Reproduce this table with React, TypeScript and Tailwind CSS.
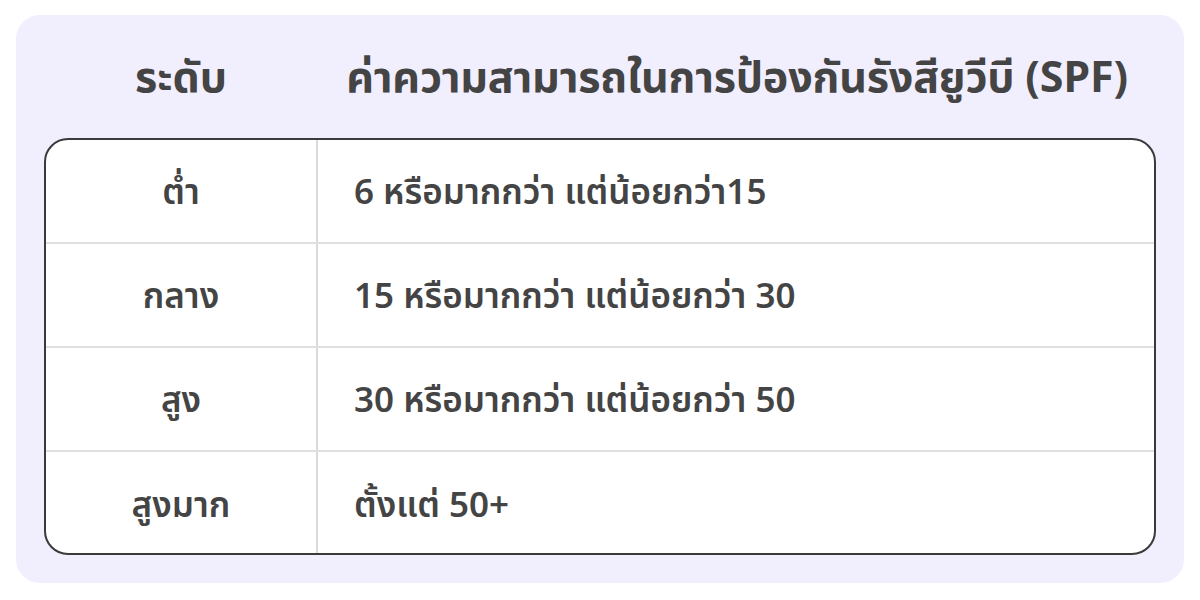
const rows = [
  { level: "ต่ำ", spf: "6 หรือมากกว่า แต่น้อยกว่า15" },
  { level: "กลาง", spf: "15 หรือมากกว่า แต่น้อยกว่า 30" },
  { level: "สูง", spf: "30 หรือมากกว่า แต่น้อยกว่า 50" },
  { level: "สูงมาก", spf: "ตั้งแต่ 50+" },
];

export default function App() {
  return (
    <div
      className="min-h-screen bg-white pt-[15px] px-[16px] text-[#444444]"
      style={{ fontFamily: '"Noto Sans Thai", "Noto Sans", "Liberation Sans", sans-serif' }}
    >
      <div className="h-[568px] rounded-[24px] bg-[#f1eefd] px-[28px] pb-[28px] flex flex-col">
        {/* header */}
        <div className="grid grid-cols-[274px_1fr] h-[123px] items-center pt-[4px]">
          <div className="text-center text-[43px] leading-none font-bold">ระดับ</div>
          <div className="text-center text-[43px] leading-none font-bold tracking-[-0.2px]">
            ค่าความสามารถในการป้องกันรังสียูวีบี (SPF)
          </div>
        </div>

        {/* table */}
        <div className="flex-1 overflow-hidden rounded-[24px] border-2 border-[#3a3a3a] bg-white">
          {rows.map((r, i) => (
            <div
              key={r.level}
              className={`grid grid-cols-[272px_1fr] h-[104px] ${
                i < rows.length - 1 ? "border-b-2 border-[#e0e0e0]" : ""
              }`}
            >
              <div className="flex items-center justify-center pt-[5px] border-r-2 border-[#dadada] text-[35px] leading-none font-semibold">
                {r.level}
              </div>
              <div className="flex items-center pt-[5px] pl-[36px] text-[35px] leading-none font-semibold">
                {r.spf}
              </div>
            </div>
          ))}
        </div>
      </div>
    </div>
  );
}
